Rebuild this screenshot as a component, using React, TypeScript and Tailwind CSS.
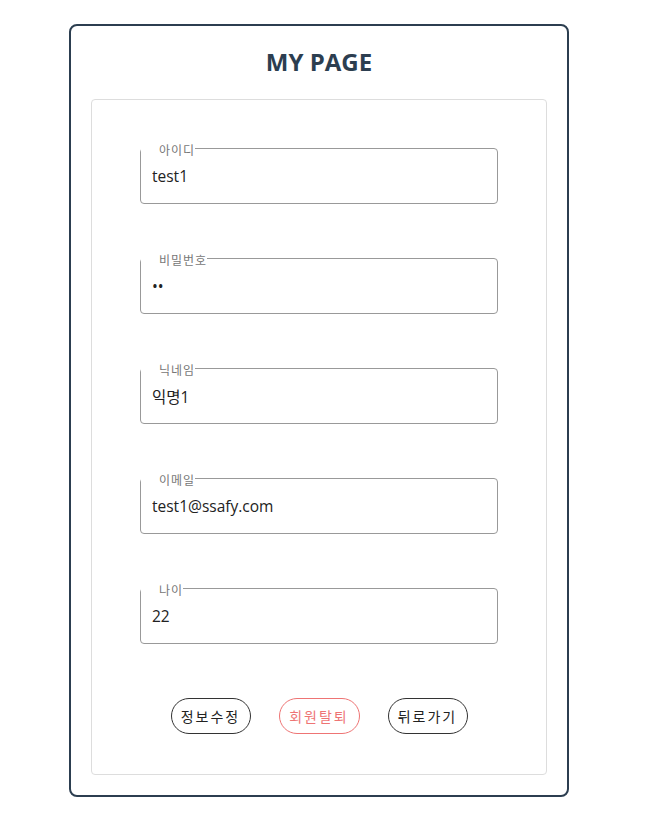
import React from "react";

const fields = [
  { label: "아이디", value: "test1", type: "text" },
  { label: "비밀번호", value: "aa", type: "password" },
  { label: "닉네임", value: "익명1", type: "text" },
  { label: "이메일", value: "test1@ssafy.com", type: "text" },
  { label: "나이", value: "22", type: "text" },
];

export default function App() {
  return (
    <div
      className="w-[638px] flex justify-center pt-[24px] pb-[20px] bg-white"
      style={{ fontFamily: '"Open Sans", "Noto Sans CJK KR", sans-serif' }}
    >
      <div className="w-[500px] border-2 border-[#2c3e50] rounded-[8px] px-[20px] pt-[20px] pb-[20px] flex flex-col">
        <h1 className="text-[24px] leading-[32px] font-bold text-[#2c3e50] text-center mb-[21px]">
          MY PAGE
        </h1>
        <div className="border border-[#dddddd] rounded-[4px] px-[48px] pt-[37px] pb-[40px] flex flex-col">
          <div className="flex flex-col gap-[43px]">
            {fields.map((f) => (
              <fieldset
                key={f.label}
                className="border border-[#999999] rounded-[4px] px-0 pb-[10px] m-0"
              >
                <legend className="pl-[18px] pr-0 pt-[6px] text-[12px] leading-[16px] text-[#777777] tracking-[1px]">
                  {f.label}
                </legend>
                <input
                  type={f.type}
                  defaultValue={f.value}
                  readOnly
                  className="block w-full h-[34px] px-[11px] text-[15.5px] text-[#222222] outline-none bg-transparent"
                />
              </fieldset>
            ))}
          </div>
          <div className="flex justify-center gap-[28px] mt-[54px]">
            <button className="h-[36px] w-[80px] rounded-full border border-[#333333] text-[14px] tracking-[2px] text-[#222222] bg-white">
              정보수정
            </button>
            <button className="h-[36px] w-[81px] rounded-full border border-[#ee7474] text-[14px] tracking-[2px] text-[#ee7474] bg-white">
              회원탈퇴
            </button>
            <button className="h-[36px] w-[80px] rounded-full border border-[#333333] text-[14px] tracking-[2px] text-[#222222] bg-white">
              뒤로가기
            </button>
          </div>
        </div>
      </div>
    </div>
  );
}
